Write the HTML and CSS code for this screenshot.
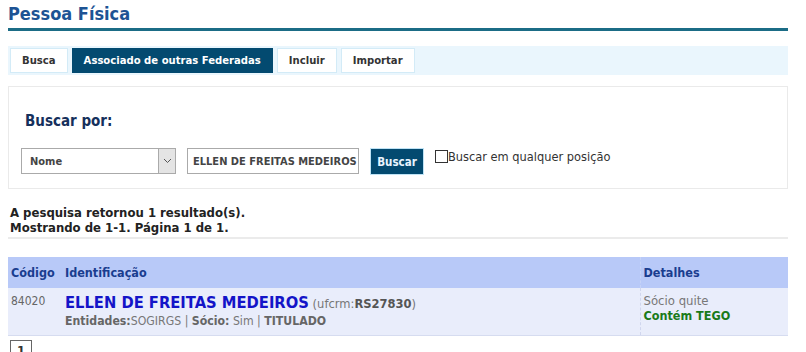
FILE: index.html
```html
<!DOCTYPE html>
<html lang="pt">
<head>
<meta charset="utf-8">
<link rel="stylesheet" href="styles.css">
</head>
<body>
<div class="page">
  <h1 class="title">Pessoa Física</h1>
  <div class="tabs">
    <span class="tab">Busca</span>
    <span class="tab active">Associado de outras Federadas</span>
    <span class="tab">Incluir</span>
    <span class="tab">Importar</span>
  </div>
  <div class="search">
    <div class="search-label">Buscar por:</div>
    <div class="search-row">
      <div class="select"><span class="select-text">Nome</span><span class="select-arrow"><svg width="9" height="6" viewBox="0 0 9 6"><path d="M1 1l3.5 3.5L8 1" fill="none" stroke="#555" stroke-width="1"/></svg></span></div>
      <div class="input">ELLEN DE FREITAS MEDEIROS</div>
      <span class="btn">Buscar</span>
      <label class="check"><span class="box"></span>Buscar em qualquer posição</label>
    </div>
  </div>
  <div class="summary">
    <div>A pesquisa retornou 1 resultado(s).</div>
    <div>Mostrando de 1-1. Página 1 de 1.</div>
  </div>
  <table class="results">
    <thead>
      <tr><th class="c-code">Código</th><th class="c-id">Identificação</th><th class="c-det">Detalhes</th></tr>
    </thead>
    <tbody>
      <tr>
        <td class="c-code code">84020</td>
        <td class="c-id">
          <div><span class="name">ELLEN DE FREITAS MEDEIROS</span> <span class="crm">(ufcrm:<b>RS27830</b>)</span></div>
          <div class="ent"><b>Entidades:</b>SOGIRGS | <b>Sócio:</b> Sim | <b>TITULADO</b></div>
        </td>
        <td class="c-det">
          <div class="quite">Sócio quite</div>
          <div class="tego">Contém TEGO</div>
        </td>
      </tr>
    </tbody>
  </table>
  <div class="pager"><span class="page-num">1</span></div>
</div>
</body>
</html>
```
FILE: styles.css
```css
* { box-sizing: border-box; }
body {
  margin: 0;
  font-family: "DejaVu Sans Condensed", "DejaVu Sans", sans-serif;
  font-size: 13px;
  color: #333;
  background: #fff;
}
.page { padding: 0 18px 0 8px; }
.title {
  margin: 0;
  padding-top: 3px;
  font-size: 18px;
  font-weight: bold;
  color: #1d5394;
  border-bottom: 3px solid #1b6c86;
  height: 31px;
}
.tabs {
  margin-top: 15px;
  background: #eaf6fd;
  height: 29px;
  display: flex;
  gap: 4px;
  padding: 2px 2px;
}
.tab {
  background: #fff;
  border: 1px solid #d3ebf7;
  color: #333;
  font-weight: bold;
  font-size: 11.2px;
  display: flex;
  align-items: center;
  padding: 0 11px;
}
.tab.active { background: #034a70; color: #fff; border-color: #034a70; }
.search {
  margin-top: 11px;
  border: 1px solid #eaeaea;
  height: 103px;
  padding: 25px 12px 0 12px;
}
.search-label {
  font-size: 15px;
  font-weight: bold;
  color: #16305c;
  margin-left: 4px;
  height: 36px;
}
.search-row { display: flex; align-items: flex-start; }
.select {
  width: 155px;
  height: 26px;
  border: 1px solid #aaa;
  display: flex;
  font-weight: bold;
  font-size: 11px;
  color: #444;
}
.select-text { flex: 1; display: flex; align-items: center; padding-left: 8px; }
.select-arrow {
  width: 17px;
  background: #e4e4e4;
  border-left: 1px solid #aaa;
  display: flex;
  align-items: center;
  justify-content: center;
}
.input {
  margin-left: 11px;
  width: 172px;
  height: 26px;
  border: 1px solid #aaa;
  font-weight: bold;
  font-size: 11px;
  color: #444;
  display: flex;
  align-items: center;
  padding-left: 5px;
  white-space: nowrap;
  overflow: hidden;
}
.btn {
  margin-left: 11px;
  width: 54px;
  height: 27px;
  background: #034a70;
  color: #e9f5ff;
  font-weight: bold;
  font-size: 11.5px;
  display: flex;
  align-items: center;
  justify-content: center;
  border: 1px solid #bfe3f5;
}
.check {
  margin-left: 11px;
  display: flex;
  align-items: flex-start;
  font-size: 12.7px;
  color: #333;
  line-height: 16px;
  margin-top: 1px;
}
.box {
  width: 13px;
  height: 13px;
  border: 1px solid #333;
  margin-top: 1px;
  display: inline-block;
}
.summary {
  margin-top: 16px;
  padding-left: 2px;
  font-weight: bold;
  font-size: 13px;
  line-height: 15px;
  color: #222;
  padding-bottom: 2px;
  border-bottom: 2px solid #ebebeb;
}
.results {
  margin-top: 18px;
  width: 100%;
  border-collapse: collapse;
}
.results th {
  background: #b8c9f8;
  color: #1a3d8f;
  text-align: left;
  font-size: 12.5px;
  font-weight: bold;
  height: 31px;
  padding: 0 3px;
}
.results td {
  background: #e9edfb;
  vertical-align: top;
  padding: 5px 3px 3px;
  height: 47px;
  border-bottom: 1px solid #d6dcf0;
}
.c-code { width: 54px; }
.c-det { width: 148px; border-left: 1px dashed #d0d6ee; }
.results th.c-det { border-left: 1px dashed #c6d3f7; }
.code { color: #666; font-size: 12px; padding-top: 6px !important; }
.name { color: #1414c8; font-weight: bold; font-size: 16.4px; }
.crm { color: #777; font-size: 12.8px; }
.crm b { color: #555; }
.ent { color: #777; font-size: 12.2px; margin-top: 2px; }
.ent b { color: #666; }
.quite { color: #777; font-size: 13px; }
.tego { color: #1a7a1a; font-weight: bold; font-size: 12.5px; }
.pager { padding-left: 2px; margin-top: 4px; }
.page-num {
  display: inline-block;
  border: 1px solid #666;
  width: 22px;
  height: 20px;
  font-weight: bold;
  text-align: center;
  font-size: 13px;
  line-height: 20px;
}
```
